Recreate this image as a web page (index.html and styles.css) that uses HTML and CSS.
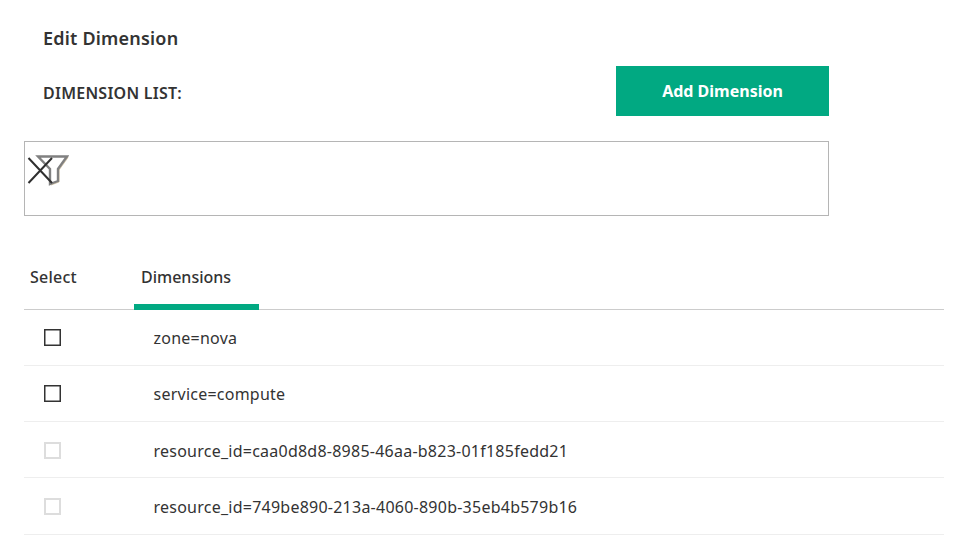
FILE: index.html
```html
<!DOCTYPE html>
<html lang="en">
<head>
<meta charset="utf-8">
<title>Edit Dimension</title>
<link rel="stylesheet" href="styles.css">
</head>
<body>
<main class="page">
  <div class="form">
    <h2 class="title">Edit Dimension</h2>
    <div class="list-head">
      <span class="list-label">DIMENSION LIST:</span>
      <button class="add" type="button">Add Dimension</button>
    </div>
    <div class="filter">
      <svg class="filter-icon" width="44" height="36" viewBox="0 0 44 36" aria-hidden="true">
        <path class="funnel-shadow" d="M14 3.5H43L34 16V28L26 31"/>
        <path class="funnel" d="M13 2.5H42L33 15V27L25 30V15Z"/>
        <path class="cross" d="M3.5 4L27 29M27 4L3.5 29"/>
      </svg>
    </div>
  </div>
  <div class="table">
    <div class="tabs">
      <div class="tab-select">Select</div>
      <div class="tab-dim">Dimensions</div>
    </div>
    <div class="row"><span class="cell-check"><span class="box"></span></span><span class="cell-text">zone=nova</span></div>
    <div class="row"><span class="cell-check"><span class="box"></span></span><span class="cell-text">service=compute</span></div>
    <div class="row row-off"><span class="cell-check"><span class="box disabled"></span></span><span class="cell-text">resource_id=caa0d8d8-8985-46aa-b823-01f185fedd21</span></div>
    <div class="row row-off"><span class="cell-check"><span class="box disabled"></span></span><span class="cell-text">resource_id=749be890-213a-4060-890b-35eb4b579b16</span></div>
  </div>
</main>
</body>
</html>
```
FILE: styles.css
```css
* { box-sizing: border-box; }
html, body { margin: 0; height: 100%; background: #fff; overflow: hidden; }
body { font-family: "Noto Sans", "Open Sans", sans-serif; color: #333; }
.page { padding: 25px 35px 0 24px; }
.form { width: 805px; }
.title { margin: 0 0 0 19px; font-size: 18px; line-height: 27px; font-weight: 600; letter-spacing: 0.2px; }
.list-head { display: flex; justify-content: space-between; align-items: center; margin-top: 14px; padding-left: 19px; }
.list-label { position: relative; top: 2px; font-size: 16px; font-weight: 600; letter-spacing: 0.25px; }
.add { width: 213px; height: 50px; border: 0; background: #01a982; color: #fff; font: 700 16px "Noto Sans", sans-serif; letter-spacing: 0; }
.filter { height: 75px; margin-top: 25px; border: 1px solid #b5b5b5; padding: 12px 0 0 0; }
.filter-icon { display: block; }
.funnel { fill: #fff; stroke: #808080; stroke-width: 2.4; }
.funnel-shadow { fill: none; stroke: #d8c8a8; stroke-width: 1; }
.cross { fill: none; stroke: #2f2f2f; stroke-width: 2; }
.table { margin-top: 41px; }
.tabs { display: flex; height: 53px; border-bottom: 1px solid #ccc; font-size: 16px; font-weight: 500; }
.tab-select { width: 110px; padding: 9px 0 0 6px; letter-spacing: 0.25px; }
.tab-dim { width: 125px; padding: 9px 0 0 7px; border-bottom: 6px solid #01a982; height: 53px; }
.row { display: flex; align-items: center; height: 56.15px; border-bottom: 1px solid #eee; font-size: 16px; letter-spacing: 0.24px; }
.row-off { padding-top: 2px; }
.cell-check { width: 130px; padding-left: 20px; display: flex; }
.cell-text { position: relative; left: -0.5px; }
.box { width: 17px; height: 17px; box-shadow: inset 0 0 0 1.5px #333; }
.box.disabled { box-shadow: inset 0 0 0 2px #ddd; }
```
